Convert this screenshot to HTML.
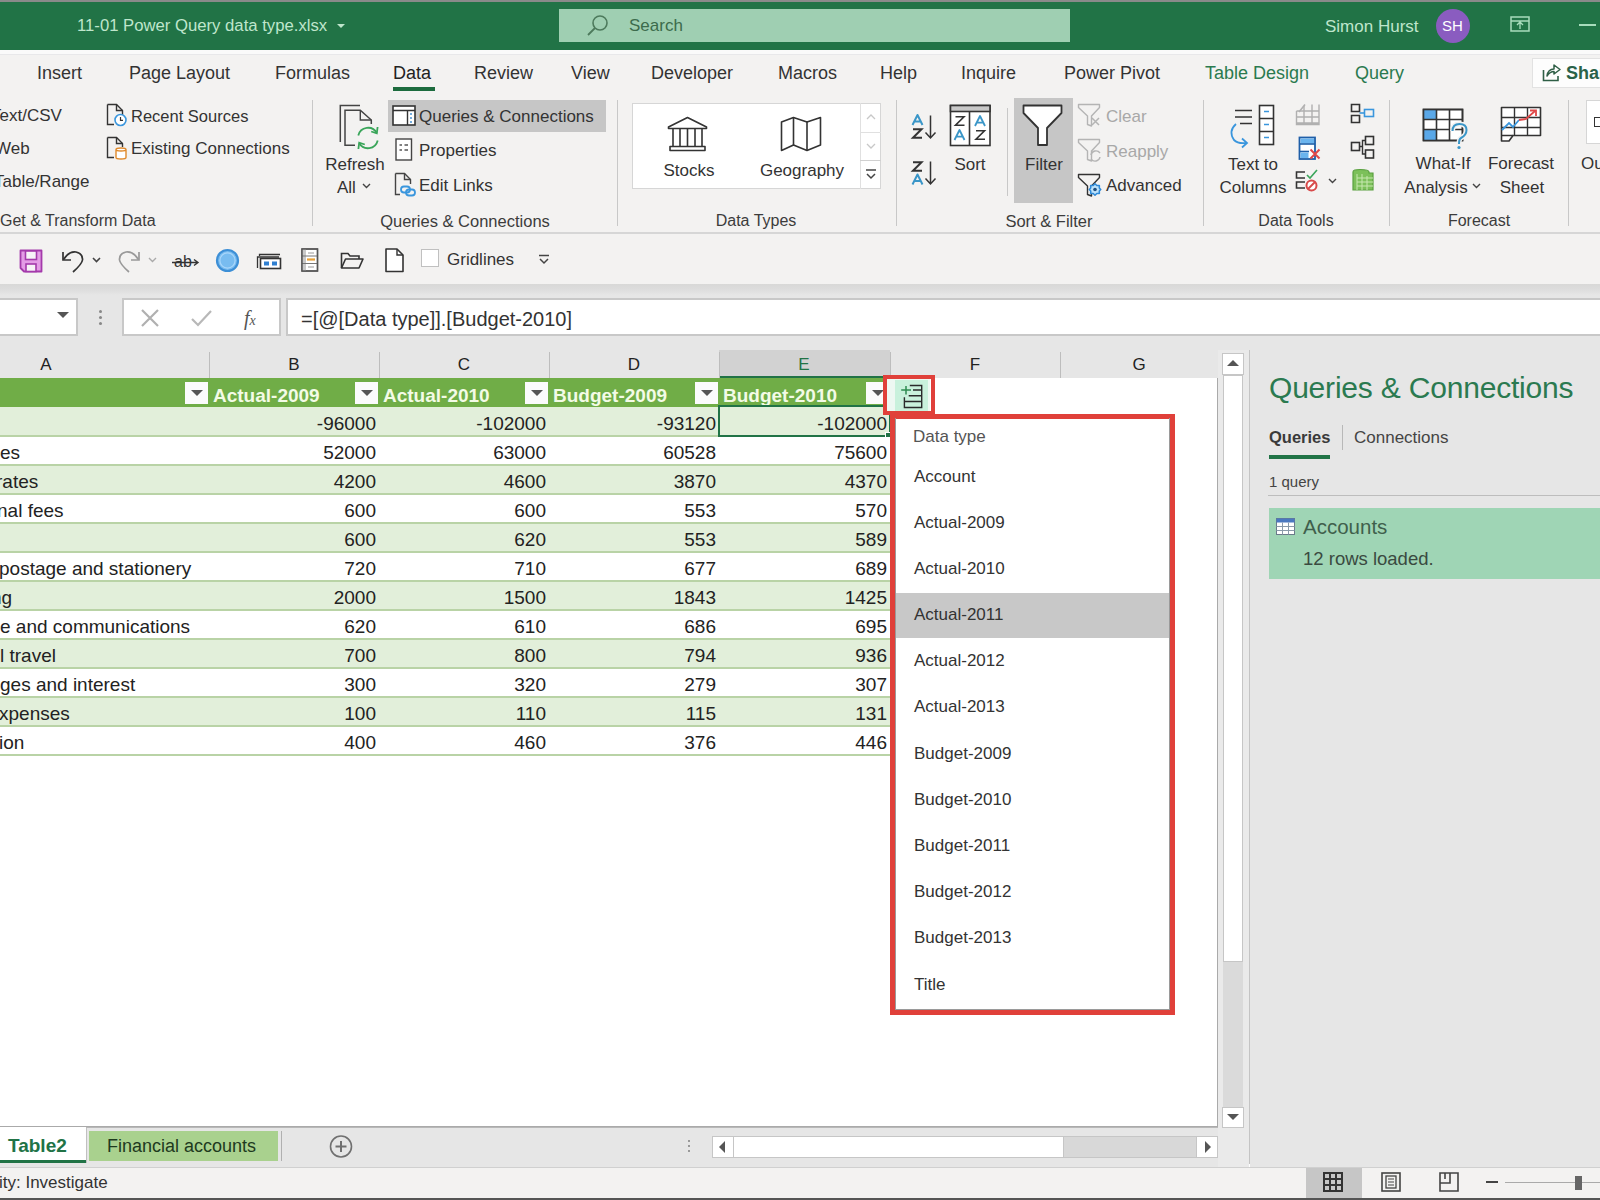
<!DOCTYPE html>
<html><head><meta charset="utf-8">
<style>
*{margin:0;padding:0;box-sizing:border-box}
html,body{width:1600px;height:1200px;overflow:hidden;background:#fff;font-family:"Liberation Sans",sans-serif}
.a{position:absolute}
.t{position:absolute;white-space:nowrap;line-height:1}
svg{position:absolute;overflow:visible}
.tab{color:#333;font-size:18px}
.grp{color:#444;font-size:16px}
.rb{color:#333;font-size:17px}
</style></head><body>


<div class="a" style="left:0;top:0;width:1600px;height:50px;background:#217346;border-top:2px solid #8a8a8a"></div>
<div class="t" style="left:77px;top:18px;font-size:16.7px;color:#bfe6cc">11-01 Power Query data type.xlsx</div>
<div class="a" style="left:337px;top:24px;border-left:4px solid transparent;border-right:4px solid transparent;border-top:4px solid #bfe6cc"></div>
<div class="a" style="left:559px;top:9px;width:511px;height:33px;background:#9fcfb2"></div>
<svg style="left:585px;top:13px" width="26" height="26"><circle cx="15" cy="10" r="7" stroke="#4d7a5c" stroke-width="1.6" fill="none"/><path d="M10 15L3 22" stroke="#4d7a5c" stroke-width="1.8"/></svg>
<div class="t" style="left:629px;top:17px;font-size:17px;color:#3c6b4c">Search</div>
<div class="t" style="left:1325px;top:18px;font-size:17px;color:#bfe6cc">Simon Hurst</div>
<div class="a" style="left:1436px;top:9px;width:34px;height:34px;border-radius:50%;background:#8a5cc0"></div>
<div class="t" style="left:1442px;top:18px;font-size:15px;color:#fff">SH</div>
<svg style="left:1510px;top:16px" width="22" height="18"><rect x="1" y="1" width="18" height="14" stroke="#a8dcbc" stroke-width="1.5" fill="none"/><path d="M1 5H19M10 6V13M7 9L10 6L13 9" stroke="#a8dcbc" stroke-width="1.3" fill="none"/></svg>
<div class="a" style="left:1579px;top:24px;width:17px;height:2px;background:#a8dcbc"></div>


<div class="a" style="left:0;top:50px;width:1600px;height:184px;background:#f3f2f1;border-bottom:2px solid #d6d6d6"></div>
<div class="t tab" style="left:37px;top:64px">Insert</div>
<div class="t tab" style="left:129px;top:64px">Page Layout</div>
<div class="t tab" style="left:275px;top:64px">Formulas</div>
<div class="t tab" style="left:393px;top:64px;color:#222">Data</div>
<div class="a" style="left:393px;top:87px;width:42px;height:4px;background:#1c6b3e"></div>
<div class="t tab" style="left:474px;top:64px">Review</div>
<div class="t tab" style="left:571px;top:64px">View</div>
<div class="t tab" style="left:651px;top:64px">Developer</div>
<div class="t tab" style="left:778px;top:64px">Macros</div>
<div class="t tab" style="left:880px;top:64px">Help</div>
<div class="t tab" style="left:961px;top:64px">Inquire</div>
<div class="t tab" style="left:1064px;top:64px">Power Pivot</div>
<div class="t tab" style="left:1205px;top:64px;color:#2a7a4f">Table Design</div>
<div class="t tab" style="left:1355px;top:64px;color:#2a7a4f">Query</div>
<div class="a" style="left:0;top:50px;width:1600px;height:5px;background:#fafafa;border-bottom:1px solid #e8e8ea"></div>
<div class="a" style="left:1532px;top:58px;width:70px;height:30px;background:#fdfdfd;border:1px solid #e2e2e2"></div>
<svg style="left:1542px;top:63px" width="20" height="20"><path d="M1.5 7V17.5H16V13" fill="none" stroke="#2f5f46" stroke-width="1.6"/><path d="M5 13Q6 6 12 6V2L18 6.5L12 11V8.5Q8 8.5 5 13Z" fill="none" stroke="#2f5f46" stroke-width="1.5" stroke-linejoin="round"/></svg>
<div class="t tab" style="left:1566px;top:64px;color:#2a6248;font-weight:bold">Share</div>

<div class="t" style="left:-9px;top:107px;font-size:17px;color:#333;">Text/CSV</div>
<div class="t" style="left:-5px;top:140px;font-size:17px;color:#333;">Web</div>
<div class="t" style="left:-6px;top:173px;font-size:17px;color:#333;">Table/Range</div>
<svg style="left:106px;top:103px" width="22" height="24"><path d="M1.5 1.5H10.5L16.5 7.5V14 M1.5 1.5V21.5H8" fill="none" stroke="#333" stroke-width="1.4"/><path d="M10.5 1.5V7.5H16.5" fill="none" stroke="#333" stroke-width="1.4"/><circle cx="14.5" cy="17" r="5.5" fill="#fff" stroke="#3a96dd" stroke-width="1.6"/><path d="M14.5 14V17.3H17" fill="none" stroke="#333" stroke-width="1.2"/></svg>
<div class="t" style="left:131px;top:108px;font-size:16.5px;color:#333;">Recent Sources</div>
<svg style="left:106px;top:136px" width="22" height="24"><path d="M1.5 1.5H10.5L16.5 7.5V11 M1.5 1.5V21.5H8" fill="none" stroke="#333" stroke-width="1.4"/><path d="M10.5 1.5V7.5H16.5" fill="none" stroke="#333" stroke-width="1.4"/><path d="M10 13.5V21.5Q10 23 15 23Q20 23 20 21.5V13.5Q20 12 15 12Q10 12 10 13.5Q10 15 15 15Q20 15 20 13.5" fill="#fff" stroke="#e08a2c" stroke-width="1.4"/></svg>
<div class="t" style="left:131px;top:140px;font-size:17px;color:#333;">Existing Connections</div>
<div class="t" style="left:0px;top:213px;font-size:16px;color:#3c3c3c;font-weight:normal">Get &amp; Transform Data</div>
<div class="a" style="left:312px;top:100px;width:1px;height:126px;background:#c8c8c8"></div>
<svg style="left:338px;top:104px" width="46" height="48"><path d="M2.3 38V1.6H22" fill="none" stroke="#444" stroke-width="1.5"/><path d="M17 41.2H7V6.3H22.3L33.3 16V20" fill="none" stroke="#444" stroke-width="1.5" stroke-linejoin="miter"/><path d="M22.3 6.3V16H33.3" fill="none" stroke="#444" stroke-width="1.4"/><path d="M20.3 31.5A10 10 0 0 1 38.8 29" fill="none" stroke="#3aa55a" stroke-width="1.8"/><path d="M39.6 23L38.8 29.3L33.2 27.5" fill="none" stroke="#3aa55a" stroke-width="1.8"/><path d="M39.7 36.5A10 10 0 0 1 21.2 39" fill="none" stroke="#3aa55a" stroke-width="1.8"/><path d="M20.4 45L21.2 38.7L26.8 40.5" fill="none" stroke="#3aa55a" stroke-width="1.8"/></svg>
<div class="t" style="left:205px;width:300px;text-align:center;top:156px;font-size:17px;color:#333;">Refresh</div>
<div class="t" style="left:337px;top:179px;font-size:17px;color:#333;">All</div>
<svg style="left:362px;top:183px" width="10" height="6"><path d="M1 1L4.5 4.5L8 1" fill="none" stroke="#444" stroke-width="1.4"/></svg>
<div class="a" style="left:388px;top:100px;width:218px;height:32px;background:#c6c6c6"></div>
<svg style="left:392px;top:105px" width="24" height="21"><rect x="1" y="1" width="22" height="19" fill="#fff" stroke="#333" stroke-width="1.6"/><path d="M1 5.5H23M15.5 5.5V20" stroke="#333" stroke-width="1.4"/><path d="M19 8V10M19 12V14M19 16V18" stroke="#3a8ad0" stroke-width="1.4"/></svg>
<div class="t" style="left:419px;top:108px;font-size:17px;color:#333;">Queries &amp; Connections</div>
<svg style="left:395px;top:138px" width="18" height="24"><rect x="1" y="1" width="15.5" height="21" fill="#fff" stroke="#444" stroke-width="1.4"/><path d="M4.5 7H7M9.5 7H13M4.5 12H7M9.5 12H13" stroke="#555" stroke-width="1.6"/></svg>
<div class="t" style="left:419px;top:142px;font-size:17px;color:#333;">Properties</div>
<svg style="left:394px;top:172px" width="24" height="25"><path d="M1.5 1.5H10.5L16.5 7.5V12 M1.5 1.5V22.5H6" fill="none" stroke="#444" stroke-width="1.4"/><path d="M10.5 1.5V7.5H16.5" fill="none" stroke="#444" stroke-width="1.4"/><rect x="7" y="14.5" width="9" height="6" rx="3" fill="none" stroke="#3a96dd" stroke-width="1.8"/><rect x="12" y="17.5" width="9" height="6" rx="3" fill="none" stroke="#3a96dd" stroke-width="1.8"/></svg>
<div class="t" style="left:419px;top:177px;font-size:17px;color:#333;">Edit Links</div>
<div class="t" style="left:315px;width:300px;text-align:center;top:213px;font-size:16.5px;color:#3c3c3c;">Queries &amp; Connections</div>
<div class="a" style="left:617px;top:100px;width:1px;height:126px;background:#c8c8c8"></div>
<div class="a" style="left:632px;top:103px;width:249px;height:86px;background:#fff;border:1px solid #d6d6d6"></div>
<div class="a" style="left:860px;top:103px;width:1px;height:86px;background:#e0e0e0"></div>
<div class="a" style="left:860px;top:132px;width:21px;height:1px;background:#e0e0e0"></div>
<div class="a" style="left:860px;top:160px;width:21px;height:1px;background:#d0d0d0"></div>
<svg style="left:865px;top:113px" width="12" height="8"><path d="M2 6L6 2L10 6" fill="none" stroke="#c8c8c8" stroke-width="1.3"/></svg>
<svg style="left:865px;top:142px" width="12" height="8"><path d="M2 2L6 6L10 2" fill="none" stroke="#c8c8c8" stroke-width="1.3"/></svg>
<svg style="left:864px;top:167px" width="14" height="14"><path d="M2 3H12M3 7L7 11L11 7" fill="none" stroke="#444" stroke-width="1.5"/></svg>
<svg style="left:667px;top:116px" width="42" height="37"><path d="M1.5 11L20.5 1.5L39.5 11V12.5H1.5Z" fill="none" stroke="#333" stroke-width="1.6" stroke-linejoin="round"/><path d="M6 13V31M13 13V31M20.5 13V31M28 13V31M35 13V31" stroke="#333" stroke-width="1.6"/><path d="M3 30.5H38V34.5H3Z" fill="none" stroke="#333" stroke-width="1.6" stroke-linejoin="round"/></svg>
<div class="t" style="left:539px;width:300px;text-align:center;top:162px;font-size:17px;color:#333;">Stocks</div>
<svg style="left:780px;top:116px" width="44" height="38"><path d="M1.5 6L13.5 1.5L27 6L40.5 1.5V29L27 34.5L13.5 29L1.5 34.5Z" fill="none" stroke="#333" stroke-width="1.6" stroke-linejoin="round"/><path d="M13.5 1.5V29M27 6V34.5" stroke="#333" stroke-width="1.6"/></svg>
<div class="t" style="left:652px;width:300px;text-align:center;top:162px;font-size:17px;color:#333;">Geography</div>
<div class="t" style="left:606px;width:300px;text-align:center;top:213px;font-size:16px;color:#3c3c3c;">Data Types</div>
<div class="a" style="left:896px;top:100px;width:1px;height:126px;background:#c8c8c8"></div>
<svg style="left:912px;top:115px" width="26" height="26"><path d="M0.5 10L5.5 0L10.5 10M2.7 6.6H8.3" fill="none" stroke="#3a96c8" stroke-width="2.0" stroke-linejoin="round"/><path d="M1.0 14.3H9.5L1.0 22.7H10.0" fill="none" stroke="#333" stroke-width="2.0" stroke-linejoin="miter"/><path d="M18.5 0.5V23M13.5 17.5L18.5 23L23.5 17.5" fill="none" stroke="#333" stroke-width="1.5"/></svg>
<svg style="left:912px;top:161px" width="26" height="26"><path d="M1.0 1.3H9.5L1.0 9.7H10.0" fill="none" stroke="#333" stroke-width="2.0" stroke-linejoin="miter"/><path d="M0.5 23.5L5.5 13.5L10.5 23.5M2.7 20.1H8.3" fill="none" stroke="#3a96c8" stroke-width="2.0" stroke-linejoin="round"/><path d="M18.5 0.5V23M13.5 17.5L18.5 23L23.5 17.5" fill="none" stroke="#333" stroke-width="1.5"/></svg>
<svg style="left:949px;top:104px" width="43" height="43"><rect x="1.5" y="1.5" width="39.5" height="40" fill="#fff" stroke="#333" stroke-width="1.6"/><rect x="1.5" y="1.5" width="39.5" height="6" fill="#c8c8c8" stroke="#333" stroke-width="1.6"/><path d="M20.5 7.5V41.5" stroke="#333" stroke-width="1.6"/><path d="M6.5 12.8H15L6.5 21.2H15.5" fill="none" stroke="#333" stroke-width="1.6" stroke-linejoin="miter"/><path d="M5.5 36L10.5 26L15.5 36M7.7 32.6H13.3" fill="none" stroke="#3a96c8" stroke-width="1.8" stroke-linejoin="round"/><path d="M26 22L31 12L36 22M28.2 18.6H33.8" fill="none" stroke="#3a96c8" stroke-width="1.8" stroke-linejoin="round"/><path d="M27.0 26.8H35.5L27.0 35.2H36.0" fill="none" stroke="#333" stroke-width="1.6" stroke-linejoin="miter"/></svg>
<div class="t" style="left:820px;width:300px;text-align:center;top:156px;font-size:17px;color:#333;">Sort</div>
<div class="a" style="left:1007px;top:108px;width:1px;height:88px;background:#c8c8c8"></div>
<div class="a" style="left:1014px;top:98px;width:59px;height:105px;background:#c6c6c6"></div>
<svg style="left:1022px;top:104px" width="42" height="44"><path d="M1.5 1.5H39.5V9L25 24V41H16V24L1.5 9Z" fill="#fff" stroke="#333" stroke-width="1.8" stroke-linejoin="round"/></svg>
<div class="t" style="left:894px;width:300px;text-align:center;top:156px;font-size:17px;color:#333;">Filter</div>
<svg style="left:1077px;top:103px" width="26" height="26"><path d="M1.5 1.5H22.5V4.5L14.5 13V23L10.5 21.5V13L1.5 4.5Z" fill="none" stroke="#b4b4b4" stroke-width="1.4" stroke-linejoin="round"/><path d="M15 15L22 22M22 15L15 22" stroke="#b4b4b4" stroke-width="1.5"/></svg>
<div class="t" style="left:1106px;top:108px;font-size:17px;color:#a8a8a8;">Clear</div>
<svg style="left:1077px;top:138px" width="26" height="26"><path d="M1.5 1.5H22.5V4.5L14.5 13V23L10.5 21.5V13L1.5 4.5Z" fill="none" stroke="#b4b4b4" stroke-width="1.4" stroke-linejoin="round"/><path d="M14 17A5 5 0 0 1 23 15M23 19A5 5 0 0 1 14 21" fill="none" stroke="#b4b4b4" stroke-width="1.4"/></svg>
<div class="t" style="left:1106px;top:143px;font-size:17px;color:#a8a8a8;">Reapply</div>
<svg style="left:1077px;top:173px" width="26" height="26"><path d="M1.5 1.5H22.5V4.5L14.5 13V23L10.5 21.5V13L1.5 4.5Z" fill="none" stroke="#333" stroke-width="1.4" stroke-linejoin="round"/><path d="M18 11.5L20.5 14L24 14L24 17.5L26 19.5L24 21.5L24 25L20.5 25L18 27.5L15.5 25L12 25L12 21.5L10 19.5L12 17.5L12 14L15.5 14Z" transform="translate(18 16.5) scale(0.72) translate(-18 -19.5)" fill="#bfe3fb" stroke="#2f8ad8" stroke-width="2.2" stroke-linejoin="round"/><circle cx="18" cy="16.5" r="1.8" fill="#1f4f80"/></svg>
<div class="t" style="left:1106px;top:177px;font-size:17px;color:#333;">Advanced</div>
<div class="t" style="left:899px;width:300px;text-align:center;top:213px;font-size:16.5px;color:#3c3c3c;">Sort &amp; Filter</div>
<div class="a" style="left:1203px;top:100px;width:1px;height:126px;background:#c8c8c8"></div>
<svg style="left:1228px;top:104px" width="48" height="44"><path d="M7 6.5H24M7 13H24M12 19.5H24" stroke="#333" stroke-width="1.6"/><rect x="31.5" y="1.5" width="14" height="39" fill="#fff" stroke="#333" stroke-width="1.6"/><path d="M31.5 14.5H45.5M31.5 27.5H45.5" stroke="#333" stroke-width="1.6"/><path d="M36 7.5H41M36 20.5H41M36 33.5H41" stroke="#3a96dd" stroke-width="1.4"/><path d="M8 20Q0 27 6 36Q10 40 18 39" fill="none" stroke="#3a96dd" stroke-width="1.8"/><path d="M14 34.5L19 39L14 43.5" fill="none" stroke="#3a96dd" stroke-width="1.8"/></svg>
<div class="t" style="left:1103px;width:300px;text-align:center;top:156px;font-size:17px;color:#333;">Text to</div>
<div class="t" style="left:1103px;width:300px;text-align:center;top:179px;font-size:17px;color:#333;">Columns</div>
<svg style="left:1295px;top:103px" width="26" height="23"><path d="M1.5 8H24M1.5 14H24M1.5 20H24M9 3V21.5M17 1.5V21.5M24 1.5V21.5H1.5V8" fill="none" stroke="#b0b0b0" stroke-width="1.4"/><path d="M4 9L10 1.5" stroke="#b0b0b0" stroke-width="1.6"/></svg>
<svg style="left:1298px;top:136px" width="26" height="25"><rect x="1.5" y="1.5" width="15.5" height="21.5" fill="#fff" stroke="#1f5fa8" stroke-width="1.8"/><rect x="2.5" y="2.5" width="13.5" height="5" fill="#6ab4ee"/><path d="M1.5 8H17" stroke="#1f5fa8" stroke-width="1.6"/><path d="M1.5 15.5H11" stroke="#1f5fa8" stroke-width="1.6"/><rect x="2.5" y="16.5" width="8" height="5.5" fill="#6ab4ee"/><path d="M12.5 13.5L21.5 22.5M21.5 13.5L12.5 22.5" stroke="#e04848" stroke-width="2"/></svg>
<svg style="left:1295px;top:168px" width="26" height="25"><path d="M10 4H1.5V10H10M10 14H1.5V20H10" fill="none" stroke="#333" stroke-width="1.6"/><path d="M12 7L15 10L22 2" fill="none" stroke="#3aa55a" stroke-width="1.6"/><circle cx="16.5" cy="17.5" r="5" fill="#fff" stroke="#d84a4a" stroke-width="2"/><path d="M13 21L20 14" stroke="#d84a4a" stroke-width="2"/></svg>
<svg style="left:1328px;top:178px" width="10" height="6"><path d="M1 1L4.5 4.5L8 1" fill="none" stroke="#444" stroke-width="1.4"/></svg>
<svg style="left:1350px;top:103px" width="26" height="22"><path d="M1.5 1.5H9.5V8.5H1.5ZM1.5 12.5H9.5V19.5H1.5Z" fill="none" stroke="#333" stroke-width="1.6"/><rect x="14.5" y="6.5" width="9" height="7" fill="none" stroke="#3a96dd" stroke-width="1.6"/><path d="M9.5 10H14.5" stroke="#3a96dd" stroke-width="1.6"/></svg>
<svg style="left:1350px;top:135px" width="26" height="25"><rect x="1.5" y="7.5" width="8" height="8" fill="none" stroke="#333" stroke-width="1.6"/><rect x="15.5" y="1.5" width="8" height="8" fill="none" stroke="#333" stroke-width="1.6"/><rect x="15.5" y="15" width="8" height="8" fill="none" stroke="#333" stroke-width="1.6"/><path d="M9.5 11.5H12.5V5.5H15.5M12.5 11.5V19H15.5" fill="none" stroke="#333" stroke-width="1.4"/></svg>
<svg style="left:1350px;top:168px" width="26" height="25"><path d="M3 4Q3 1.5 10 1.5Q19 1.5 19 4V5H23V22H3Z" fill="#7cc05a" stroke="#5aa040" stroke-width="1.2"/><path d="M7 6V22M12 6V22M17 8V22M7 10H23M7 14H23M7 18H23" stroke="#c8e8b0" stroke-width="1"/></svg>
<div class="t" style="left:1146px;width:300px;text-align:center;top:213px;font-size:16px;color:#3c3c3c;">Data Tools</div>
<div class="a" style="left:1389px;top:100px;width:1px;height:126px;background:#c8c8c8"></div>
<svg style="left:1422px;top:108px" width="48" height="42"><rect x="1.5" y="1.5" width="39" height="31" fill="#fff" stroke="#333" stroke-width="1.6"/><rect x="1.5" y="1.5" width="13" height="10" fill="#5aa8e8"/><rect x="1.5" y="21.5" width="13" height="11" fill="#5aa8e8"/><path d="M1.5 11.5H40.5M1.5 21.5H40.5M14.5 1.5V32.5M27.5 1.5V32.5" stroke="#333" stroke-width="1.6"/><rect x="1.5" y="1.5" width="39" height="31" fill="none" stroke="#333" stroke-width="1.6"/><path d="M30.5 23Q30.5 16 37.5 16Q44.5 16 44.5 22Q44.5 27 39 30Q37 31 37 36" fill="none" stroke="#f3f2f1" stroke-width="5"/><path d="M30.5 23Q30.5 16 37.5 16Q44.5 16 44.5 22Q44.5 27 39 30Q37 31 37 36" fill="none" stroke="#3a96c8" stroke-width="2"/><circle cx="37" cy="39.5" r="1.6" fill="#3a96c8"/></svg>
<div class="t" style="left:1293px;width:300px;text-align:center;top:155px;font-size:17px;color:#333;">What-If</div>
<div class="t" style="left:1286px;width:300px;text-align:center;top:179px;font-size:17px;color:#333;">Analysis</div>
<svg style="left:1472px;top:183px" width="10" height="6"><path d="M1 1L4.5 4.5L8 1" fill="none" stroke="#444" stroke-width="1.4"/></svg>
<svg style="left:1500px;top:106px" width="44" height="38"><path d="M1.5 1.5H40.5V29.5H13L9 35H1.5Z" fill="#fff" stroke="#333" stroke-width="1.6" stroke-linejoin="round"/><path d="M1.5 11.5H40.5M1.5 21.5H40.5M14.5 1.5V29.5M27.5 1.5V29.5M1.5 29.5H13" stroke="#333" stroke-width="1.4"/><path d="M2 24L9 17L13 21L19 14" fill="none" stroke="#3a96dd" stroke-width="1.8"/><path d="M19 14L26 13L35 5" fill="none" stroke="#e04848" stroke-width="1.8"/><path d="M30 4.5H36V10" fill="none" stroke="#e04848" stroke-width="1.8"/></svg>
<div class="t" style="left:1371px;width:300px;text-align:center;top:155px;font-size:17px;color:#333;">Forecast</div>
<div class="t" style="left:1372px;width:300px;text-align:center;top:179px;font-size:17px;color:#333;">Sheet</div>
<div class="t" style="left:1329px;width:300px;text-align:center;top:213px;font-size:16px;color:#3c3c3c;">Forecast</div>
<div class="a" style="left:1568px;top:100px;width:1px;height:126px;background:#c8c8c8"></div>
<div class="a" style="left:1586px;top:100px;width:20px;height:44px;background:#fff;border:1px solid #d6d6d6"></div>
<div class="a" style="left:1594px;top:117px;width:6px;height:10px;border:1.5px solid #333;border-right:none"></div>
<div class="t" style="left:1581px;top:155px;font-size:17px;color:#333;">Ou</div>

<div class="a" style="left:0;top:234px;width:1600px;height:50px;background:#f3f2f1"></div>

<svg style="left:19px;top:249px" width="25" height="25"><path d="M1.5 1.5H22.5V22.5H5L1.5 19Z" fill="#e49ce6" stroke="#a43aab" stroke-width="1.8" stroke-linejoin="round"/><rect x="6.5" y="2" width="11" height="8.5" fill="#f7f2f7" stroke="#a43aab" stroke-width="1.6"/><rect x="7" y="15" width="10" height="7.5" fill="#f7f2f7" stroke="#a43aab" stroke-width="1.6"/></svg>
<svg style="left:61px;top:249px" width="26" height="25"><path d="M2 3V11H10" fill="none" stroke="#333" stroke-width="1.7"/><path d="M2.5 10.5Q8 2 15 3Q22 4.5 21.5 11Q21 15 12 23" fill="none" stroke="#333" stroke-width="1.7"/></svg>
<svg style="left:92px;top:257px" width="10" height="6"><path d="M1 1L4.5 4.5L8 1" fill="none" stroke="#444" stroke-width="1.6"/></svg>
<svg style="left:117px;top:249px" width="26" height="25"><path d="M22 3V11H14" fill="none" stroke="#999" stroke-width="1.7"/><path d="M21.5 10.5Q16 2 9 3Q2 4.5 2.5 11Q3 15 12 23" fill="none" stroke="#999" stroke-width="1.7"/></svg>
<svg style="left:148px;top:257px" width="10" height="6"><path d="M1 1L4.5 4.5L8 1" fill="none" stroke="#aaa" stroke-width="1.4"/></svg>
<svg style="left:172px;top:252px" width="28" height="20"><text x="2" y="15" font-family="Liberation Sans" font-size="16" fill="#333">ab</text><path d="M0 10.5H26M22 7.5L26 10.5L22 13.5" fill="none" stroke="#333" stroke-width="1.4"/></svg>
<svg style="left:215px;top:248px" width="25" height="25"><circle cx="12.5" cy="12.5" r="10.5" fill="#78bcf0" stroke="#3d8fd6" stroke-width="2.2"/><circle cx="12.5" cy="12.5" r="7.6" fill="none" stroke="#a9d6fa" stroke-width="1.2"/></svg>
<svg style="left:256px;top:253px" width="27" height="17"><path d="M1.5 15V4H23M3.5 3V1.5H24" fill="none" stroke="#333" stroke-width="1.3"/><rect x="4.5" y="5.5" width="20" height="10" fill="#fff" stroke="#333" stroke-width="1.6"/><rect x="8" y="8.5" width="5" height="4" fill="#2f7fd0"/><rect x="16" y="8.5" width="5" height="4" fill="#2f7fd0"/></svg>
<svg style="left:301px;top:248px" width="18" height="25"><rect x="1" y="1" width="15.5" height="22" fill="#fff" stroke="#555" stroke-width="1.4"/><rect x="1" y="1" width="4" height="22" fill="#c8c8c8"/><path d="M1 8H16.5M1 15.5H16.5" stroke="#777" stroke-width="1"/><path d="M6 11.5H14" stroke="#e8a23a" stroke-width="2.2"/><path d="M7 5H13M7 19H13" stroke="#999" stroke-width="1"/><rect x="1" y="1" width="15.5" height="22" fill="none" stroke="#555" stroke-width="1.4"/></svg>
<svg style="left:340px;top:251px" width="25" height="19"><path d="M1.5 17V2.5H8L10 5H19V8" fill="none" stroke="#333" stroke-width="1.6"/><path d="M1.5 17L5.5 8H23L19 17Z" fill="none" stroke="#333" stroke-width="1.6" stroke-linejoin="round"/></svg>
<svg style="left:385px;top:248px" width="20" height="25"><path d="M1 1H12L18 7V23.5H1Z" fill="#fff" stroke="#333" stroke-width="1.6" stroke-linejoin="round"/><path d="M12 1V7H18" fill="none" stroke="#333" stroke-width="1.4"/></svg>
<div class="a" style="left:421px;top:249px;width:18px;height:18px;background:#fff;border:1px solid #c0c0c0"></div>
<div class="t" style="left:447px;top:251px;font-size:17px;color:#333;">Gridlines</div>
<svg style="left:538px;top:254px" width="12" height="11"><path d="M1 1.5H11M2 5L6 9L10 5" fill="none" stroke="#444" stroke-width="1.5"/></svg>

<div class="a" style="left:0;top:284px;width:1600px;height:66px;background:linear-gradient(#d8d8d7 0px,#dcdcdc 5px,#e6e6e6 11px,#e6e6e6 66px)"></div>
<div class="a" style="left:-2px;top:298px;width:80px;height:38px;background:#fff;border:2px solid #c8c8c8"></div>
<div class="a" style="left:57px;top:312px;border-left:6px solid transparent;border-right:6px solid transparent;border-top:6px solid #555"></div>
<div class="a" style="left:99px;top:310px;width:3px;height:3px;background:#888;border-radius:50%;box-shadow:0 6px 0 #888,0 12px 0 #888"></div>
<div class="a" style="left:122px;top:298px;width:159px;height:38px;background:#fff;border:2px solid #c8c8c8"></div>
<div class="a" style="left:286px;top:298px;width:1320px;height:38px;background:#fff;border:2px solid #c8c8c8"></div>
<svg style="left:140px;top:308px" width="20" height="20"><path d="M2 2L18 18M18 2L2 18" stroke="#b0b0b0" stroke-width="2.2"/></svg>
<svg style="left:190px;top:308px" width="24" height="20"><path d="M2 11L8 17L21 3" stroke="#b8b8b8" stroke-width="2.2" fill="none"/></svg>
<div class="t" style="left:244px;top:307px;font:italic 20px 'Liberation Serif';color:#555">f<span style="font-size:14px">x</span></div>
<div class="t" style="left:301px;top:309px;font-size:20px;color:#333">=[@[Data type]].[Budget-2010]</div>


<div class="a" style="left:0;top:350px;width:1250px;height:777px;background:#e6e6e6"></div>
<div class="a" style="left:719px;top:350px;width:171px;height:28px;background:#d2d2d2;border-bottom:2px solid #217346"></div>
<div class="a" style="left:0;top:378px;width:1218px;height:749px;background:#fff;border-right:1px solid #aaa;border-bottom:1px solid #aaa"></div>

<div class="t" style="left:38px;top:356px;width:16px;text-align:center;font-size:17px;color:#222">A</div>
<div class="a" style="left:209px;top:352px;width:1px;height:26px;background:#bdbdbd"></div>
<div class="t" style="left:286px;top:356px;width:16px;text-align:center;font-size:17px;color:#222">B</div>
<div class="a" style="left:379px;top:352px;width:1px;height:26px;background:#bdbdbd"></div>
<div class="t" style="left:456px;top:356px;width:16px;text-align:center;font-size:17px;color:#222">C</div>
<div class="a" style="left:549px;top:352px;width:1px;height:26px;background:#bdbdbd"></div>
<div class="t" style="left:626px;top:356px;width:16px;text-align:center;font-size:17px;color:#222">D</div>
<div class="a" style="left:719px;top:352px;width:1px;height:26px;background:#bdbdbd"></div>
<div class="t" style="left:796px;top:356px;width:16px;text-align:center;font-size:17px;color:#217346">E</div>
<div class="a" style="left:890px;top:352px;width:1px;height:26px;background:#bdbdbd"></div>
<div class="t" style="left:967px;top:356px;width:16px;text-align:center;font-size:17px;color:#222">F</div>
<div class="a" style="left:1060px;top:352px;width:1px;height:26px;background:#bdbdbd"></div>
<div class="t" style="left:1131px;top:356px;width:16px;text-align:center;font-size:17px;color:#222">G</div>
<div class="a" style="left:0;top:378px;width:890px;height:29px;background:#70ad47"></div>
<div class="t" style="left:213px;top:386px;font-size:19px;font-weight:bold;color:#f3fbe6">Actual-2009</div>
<div class="t" style="left:383px;top:386px;font-size:19px;font-weight:bold;color:#f3fbe6">Actual-2010</div>
<div class="t" style="left:553px;top:386px;font-size:19px;font-weight:bold;color:#f3fbe6">Budget-2009</div>
<div class="t" style="left:723px;top:386px;font-size:19px;font-weight:bold;color:#f3fbe6">Budget-2010</div>
<div class="a" style="left:185px;top:382px;width:23px;height:22px;background:#fbfbfb"></div>
<div class="a" style="left:191px;top:390px;border-left:6px solid transparent;border-right:6px solid transparent;border-top:6px solid #555"></div>
<div class="a" style="left:355px;top:382px;width:23px;height:22px;background:#fbfbfb"></div>
<div class="a" style="left:361px;top:390px;border-left:6px solid transparent;border-right:6px solid transparent;border-top:6px solid #555"></div>
<div class="a" style="left:525px;top:382px;width:23px;height:22px;background:#fbfbfb"></div>
<div class="a" style="left:531px;top:390px;border-left:6px solid transparent;border-right:6px solid transparent;border-top:6px solid #555"></div>
<div class="a" style="left:695px;top:382px;width:23px;height:22px;background:#fbfbfb"></div>
<div class="a" style="left:701px;top:390px;border-left:6px solid transparent;border-right:6px solid transparent;border-top:6px solid #555"></div>
<div class="a" style="left:866px;top:382px;width:23px;height:22px;background:#fbfbfb"></div>
<div class="a" style="left:872px;top:390px;border-left:6px solid transparent;border-right:6px solid transparent;border-top:6px solid #555"></div>
<div class="a" style="left:0;top:407px;width:890px;height:29px;background:#e2efda"></div>
<div class="t" style="left:179px;top:414px;width:197px;text-align:right;font-size:19px;color:#222">-96000</div>
<div class="t" style="left:349px;top:414px;width:197px;text-align:right;font-size:19px;color:#222">-102000</div>
<div class="t" style="left:519px;top:414px;width:197px;text-align:right;font-size:19px;color:#222">-93120</div>
<div class="t" style="left:690px;top:414px;width:197px;text-align:right;font-size:19px;color:#222">-102000</div>
<div class="a" style="left:0;top:436px;width:890px;height:29px;background:#ffffff"></div>
<div class="t" style="left:0px;top:443px;font-size:19px;color:#222">es</div>
<div class="t" style="left:179px;top:443px;width:197px;text-align:right;font-size:19px;color:#222">52000</div>
<div class="t" style="left:349px;top:443px;width:197px;text-align:right;font-size:19px;color:#222">63000</div>
<div class="t" style="left:519px;top:443px;width:197px;text-align:right;font-size:19px;color:#222">60528</div>
<div class="t" style="left:690px;top:443px;width:197px;text-align:right;font-size:19px;color:#222">75600</div>
<div class="a" style="left:0;top:465px;width:890px;height:29px;background:#e2efda"></div>
<div class="t" style="left:-4px;top:472px;font-size:19px;color:#222">rates</div>
<div class="t" style="left:179px;top:472px;width:197px;text-align:right;font-size:19px;color:#222">4200</div>
<div class="t" style="left:349px;top:472px;width:197px;text-align:right;font-size:19px;color:#222">4600</div>
<div class="t" style="left:519px;top:472px;width:197px;text-align:right;font-size:19px;color:#222">3870</div>
<div class="t" style="left:690px;top:472px;width:197px;text-align:right;font-size:19px;color:#222">4370</div>
<div class="a" style="left:0;top:494px;width:890px;height:29px;background:#ffffff"></div>
<div class="t" style="left:-3px;top:501px;font-size:19px;color:#222">nal fees</div>
<div class="t" style="left:179px;top:501px;width:197px;text-align:right;font-size:19px;color:#222">600</div>
<div class="t" style="left:349px;top:501px;width:197px;text-align:right;font-size:19px;color:#222">600</div>
<div class="t" style="left:519px;top:501px;width:197px;text-align:right;font-size:19px;color:#222">553</div>
<div class="t" style="left:690px;top:501px;width:197px;text-align:right;font-size:19px;color:#222">570</div>
<div class="a" style="left:0;top:523px;width:890px;height:29px;background:#e2efda"></div>
<div class="t" style="left:179px;top:530px;width:197px;text-align:right;font-size:19px;color:#222">600</div>
<div class="t" style="left:349px;top:530px;width:197px;text-align:right;font-size:19px;color:#222">620</div>
<div class="t" style="left:519px;top:530px;width:197px;text-align:right;font-size:19px;color:#222">553</div>
<div class="t" style="left:690px;top:530px;width:197px;text-align:right;font-size:19px;color:#222">589</div>
<div class="a" style="left:0;top:552px;width:890px;height:29px;background:#ffffff"></div>
<div class="t" style="left:-1px;top:559px;font-size:19px;color:#222">postage and stationery</div>
<div class="t" style="left:179px;top:559px;width:197px;text-align:right;font-size:19px;color:#222">720</div>
<div class="t" style="left:349px;top:559px;width:197px;text-align:right;font-size:19px;color:#222">710</div>
<div class="t" style="left:519px;top:559px;width:197px;text-align:right;font-size:19px;color:#222">677</div>
<div class="t" style="left:690px;top:559px;width:197px;text-align:right;font-size:19px;color:#222">689</div>
<div class="a" style="left:0;top:581px;width:890px;height:29px;background:#e2efda"></div>
<div class="t" style="left:-9px;top:588px;font-size:19px;color:#222">ng</div>
<div class="t" style="left:179px;top:588px;width:197px;text-align:right;font-size:19px;color:#222">2000</div>
<div class="t" style="left:349px;top:588px;width:197px;text-align:right;font-size:19px;color:#222">1500</div>
<div class="t" style="left:519px;top:588px;width:197px;text-align:right;font-size:19px;color:#222">1843</div>
<div class="t" style="left:690px;top:588px;width:197px;text-align:right;font-size:19px;color:#222">1425</div>
<div class="a" style="left:0;top:610px;width:890px;height:29px;background:#ffffff"></div>
<div class="t" style="left:0px;top:617px;font-size:19px;color:#222">e and communications</div>
<div class="t" style="left:179px;top:617px;width:197px;text-align:right;font-size:19px;color:#222">620</div>
<div class="t" style="left:349px;top:617px;width:197px;text-align:right;font-size:19px;color:#222">610</div>
<div class="t" style="left:519px;top:617px;width:197px;text-align:right;font-size:19px;color:#222">686</div>
<div class="t" style="left:690px;top:617px;width:197px;text-align:right;font-size:19px;color:#222">695</div>
<div class="a" style="left:0;top:639px;width:890px;height:29px;background:#e2efda"></div>
<div class="t" style="left:0px;top:646px;font-size:19px;color:#222">l travel</div>
<div class="t" style="left:179px;top:646px;width:197px;text-align:right;font-size:19px;color:#222">700</div>
<div class="t" style="left:349px;top:646px;width:197px;text-align:right;font-size:19px;color:#222">800</div>
<div class="t" style="left:519px;top:646px;width:197px;text-align:right;font-size:19px;color:#222">794</div>
<div class="t" style="left:690px;top:646px;width:197px;text-align:right;font-size:19px;color:#222">936</div>
<div class="a" style="left:0;top:668px;width:890px;height:29px;background:#ffffff"></div>
<div class="t" style="left:0px;top:675px;font-size:19px;color:#222">ges and interest</div>
<div class="t" style="left:179px;top:675px;width:197px;text-align:right;font-size:19px;color:#222">300</div>
<div class="t" style="left:349px;top:675px;width:197px;text-align:right;font-size:19px;color:#222">320</div>
<div class="t" style="left:519px;top:675px;width:197px;text-align:right;font-size:19px;color:#222">279</div>
<div class="t" style="left:690px;top:675px;width:197px;text-align:right;font-size:19px;color:#222">307</div>
<div class="a" style="left:0;top:697px;width:890px;height:29px;background:#e2efda"></div>
<div class="t" style="left:-1px;top:704px;font-size:19px;color:#222">xpenses</div>
<div class="t" style="left:179px;top:704px;width:197px;text-align:right;font-size:19px;color:#222">100</div>
<div class="t" style="left:349px;top:704px;width:197px;text-align:right;font-size:19px;color:#222">110</div>
<div class="t" style="left:519px;top:704px;width:197px;text-align:right;font-size:19px;color:#222">115</div>
<div class="t" style="left:690px;top:704px;width:197px;text-align:right;font-size:19px;color:#222">131</div>
<div class="a" style="left:0;top:726px;width:890px;height:29px;background:#ffffff"></div>
<div class="t" style="left:-1px;top:733px;font-size:19px;color:#222">ion</div>
<div class="t" style="left:179px;top:733px;width:197px;text-align:right;font-size:19px;color:#222">400</div>
<div class="t" style="left:349px;top:733px;width:197px;text-align:right;font-size:19px;color:#222">460</div>
<div class="t" style="left:519px;top:733px;width:197px;text-align:right;font-size:19px;color:#222">376</div>
<div class="t" style="left:690px;top:733px;width:197px;text-align:right;font-size:19px;color:#222">446</div>
<div class="a" style="left:0;top:435px;width:890px;height:2px;background:#b9d3a6"></div>
<div class="a" style="left:0;top:464px;width:890px;height:2px;background:#b9d3a6"></div>
<div class="a" style="left:0;top:493px;width:890px;height:2px;background:#b9d3a6"></div>
<div class="a" style="left:0;top:522px;width:890px;height:2px;background:#b9d3a6"></div>
<div class="a" style="left:0;top:551px;width:890px;height:2px;background:#b9d3a6"></div>
<div class="a" style="left:0;top:580px;width:890px;height:2px;background:#b9d3a6"></div>
<div class="a" style="left:0;top:609px;width:890px;height:2px;background:#b9d3a6"></div>
<div class="a" style="left:0;top:638px;width:890px;height:2px;background:#b9d3a6"></div>
<div class="a" style="left:0;top:667px;width:890px;height:2px;background:#b9d3a6"></div>
<div class="a" style="left:0;top:696px;width:890px;height:2px;background:#b9d3a6"></div>
<div class="a" style="left:0;top:725px;width:890px;height:2px;background:#b9d3a6"></div>
<div class="a" style="left:0;top:754px;width:890px;height:2px;background:#b9d3a6"></div>
<div class="a" style="left:718px;top:405px;width:173px;height:32px;border:2px solid #217346"></div>
<div class="a" style="left:885px;top:432px;width:6px;height:6px;background:#217346;border:1px solid #fff"></div>
<div class="a" style="left:1218px;top:350px;width:31px;height:817px;background:#eaeaea"></div>
<div class="a" style="left:1223px;top:375px;width:20px;height:587px;background:#fff;border:1px solid #c6c6c6"></div>
<div class="a" style="left:1223px;top:962px;width:20px;height:145px;background:#dadada"></div>
<div class="a" style="left:1222px;top:353px;width:22px;height:22px;background:#fff;border:1px solid #c6c6c6"></div>
<div class="a" style="left:1227px;top:360px;border-left:6px solid transparent;border-right:6px solid transparent;border-bottom:6px solid #555"></div>
<div class="a" style="left:1222px;top:1107px;width:22px;height:21px;background:#fff;border:1px solid #c6c6c6"></div>
<div class="a" style="left:1227px;top:1114px;border-left:6px solid transparent;border-right:6px solid transparent;border-top:6px solid #555"></div>
<div class="a" style="left:1249px;top:350px;width:1px;height:814px;background:#c4c4c4"></div>
<div class="a" style="left:1250px;top:350px;width:350px;height:817px;background:#e6e6e6"></div>
<div class="t" style="left:1269px;top:373px;font-size:30px;color:#2b7a50;letter-spacing:-0.2px">Queries &amp; Connections</div>
<div class="t" style="left:1269px;top:429px;font-size:16.5px;color:#3a3a3a;font-weight:bold">Queries</div>
<div class="a" style="left:1269px;top:455px;width:61px;height:4px;background:#217346"></div>
<div class="a" style="left:1342px;top:425px;width:1px;height:25px;background:#b8b8b8"></div>
<div class="t" style="left:1354px;top:429px;font-size:17px;color:#444">Connections</div>
<div class="t" style="left:1269px;top:474px;font-size:15px;color:#444">1 query</div>
<div class="a" style="left:1268px;top:495px;width:332px;height:1px;background:#bdbdbd"></div>
<div class="a" style="left:1269px;top:508px;width:331px;height:71px;background:#9fd5b5"></div>
<svg style="left:1276px;top:518px" width="20" height="18"><rect x="0.5" y="0.5" width="18" height="16" fill="#fff" stroke="#6a7a8a"/><rect x="0.5" y="0.5" width="18" height="4" fill="#4a78c0"/><path d="M0.5 8.5H18.5M0.5 12.5H18.5M6.5 4.5V16.5M12.5 4.5V16.5" stroke="#8a9aaa" stroke-width="1"/></svg>
<div class="t" style="left:1303px;top:517px;font-size:20.5px;color:#3f5f4c">Accounts</div>
<div class="t" style="left:1303px;top:550px;font-size:18.5px;color:#3a4a40">12 rows loaded.</div>
<div class="a" style="left:0;top:1127px;width:1218px;height:40px;background:#e6e6e6;border-top:1px solid #b8b8b8"></div>
<div class="a" style="left:0;top:1127px;width:86px;height:36px;background:#fff"></div>
<div class="a" style="left:0;top:1160px;width:86px;height:3px;background:#217346"></div>
<div class="t" style="left:8px;top:1136px;font-size:19px;font-weight:bold;color:#217346">Table2</div>
<div class="a" style="left:86px;top:1128px;width:1px;height:35px;background:#c0c0c0"></div>
<div class="a" style="left:89px;top:1131px;width:189px;height:30px;background:#a9d18e"></div>
<div class="t" style="left:107px;top:1137px;font-size:18px;color:#1e3a1e">Financial accounts</div>
<div class="a" style="left:281px;top:1131px;width:1px;height:30px;background:#b0b0b0"></div>
<svg style="left:329px;top:1135px" width="24" height="24"><circle cx="12" cy="11.5" r="10.5" stroke="#707070" stroke-width="1.6" fill="none"/><path d="M12 6V17M6.5 11.5H17.5" stroke="#707070" stroke-width="2"/></svg>
<div class="a" style="left:688px;top:1140px;width:2px;height:2px;background:#999;box-shadow:0 5px 0 #999,0 10px 0 #999"></div>
<div class="a" style="left:712px;top:1136px;width:505px;height:22px;background:#d8d8d8;border:1px solid #c6c6c6"></div>
<div class="a" style="left:712px;top:1136px;width:22px;height:22px;background:#fff;border:1px solid #c6c6c6"></div>
<div class="a" style="left:719px;top:1141px;border-top:6px solid transparent;border-bottom:6px solid transparent;border-right:6px solid #555"></div>
<div class="a" style="left:733px;top:1136px;width:331px;height:22px;background:#fff;border:1px solid #c6c6c6"></div>
<div class="a" style="left:1196px;top:1136px;width:22px;height:22px;background:#fff;border:1px solid #c6c6c6"></div>
<div class="a" style="left:1205px;top:1141px;border-top:6px solid transparent;border-bottom:6px solid transparent;border-left:6px solid #555"></div>
<div class="a" style="left:0;top:1167px;width:1600px;height:33px;background:#f3f2f1;border-top:1px solid #d0d0d0;border-bottom:2px solid #555"></div>
<div class="t" style="left:-1px;top:1174px;font-size:17px;color:#333">ity: Investigate</div>
<div class="a" style="left:1306px;top:1168px;width:56px;height:30px;background:#c6c6c6"></div>
<svg style="left:1323px;top:1172px" width="20" height="20"><rect x="1" y="1" width="18" height="18" fill="none" stroke="#333" stroke-width="2"/><path d="M7 1V19M13 1V19M1 7H19M1 13H19" stroke="#333" stroke-width="2"/></svg>
<svg style="left:1381px;top:1172px" width="20" height="20"><rect x="1" y="1" width="18" height="18" fill="none" stroke="#444" stroke-width="1.6"/><rect x="5" y="4" width="10" height="12" fill="none" stroke="#444" stroke-width="1.3"/><path d="M7 7H13M7 10H13M7 13H13" stroke="#444" stroke-width="1.2"/></svg>
<svg style="left:1439px;top:1172px" width="20" height="20"><path d="M1 1H19V19H1Z M1 11H11V1 M6 1V7" fill="none" stroke="#444" stroke-width="1.6"/></svg>
<div class="a" style="left:1486px;top:1181px;width:12px;height:2px;background:#444"></div>
<div class="a" style="left:1505px;top:1182px;width:95px;height:1px;background:#aaa"></div>
<div class="a" style="left:1575px;top:1176px;width:7px;height:14px;background:#666"></div>
<div class="a" style="left:883px;top:375px;width:52px;height:40px;border:4px solid #e0403a"></div>
<div class="a" style="left:887px;top:379px;width:43px;height:32px;background:#eef8f2"></div>
<div class="a" style="left:895px;top:380px;width:33px;height:31px;background:#c9f1dc"></div>
<svg style="left:900px;top:383px" width="26" height="28"><path d="M9.8 2.5H21.7V24.5H4.4V14.3M13 7H21.7M8.7 12.8H21.7M4.4 18.5H21.7" fill="none" stroke="#2a2a2a" stroke-width="1.4"/><path d="M6 3V11.5M1.2 7H11" stroke="#2e8a50" stroke-width="1.5"/></svg>
<div class="a" style="left:890px;top:414px;width:285px;height:601px;border:5px solid #e0403a;background:#fff"></div>
<div class="a" style="left:895px;top:418px;width:275px;height:592px;border:1px solid #9a9a9a;border-top:none"></div>
<div class="a" style="left:896px;top:593px;width:273px;height:45px;background:#c8c8c8"></div>
<div class="t" style="left:913px;top:428px;font-size:17px;color:#555">Data type</div>
<div class="t" style="left:914px;top:468px;font-size:17px;color:#333">Account</div>
<div class="t" style="left:914px;top:514px;font-size:17px;color:#333">Actual-2009</div>
<div class="t" style="left:914px;top:560px;font-size:17px;color:#333">Actual-2010</div>
<div class="t" style="left:914px;top:606px;font-size:17px;color:#333">Actual-2011</div>
<div class="t" style="left:914px;top:652px;font-size:17px;color:#333">Actual-2012</div>
<div class="t" style="left:914px;top:698px;font-size:17px;color:#333">Actual-2013</div>
<div class="t" style="left:914px;top:745px;font-size:17px;color:#333">Budget-2009</div>
<div class="t" style="left:914px;top:791px;font-size:17px;color:#333">Budget-2010</div>
<div class="t" style="left:914px;top:837px;font-size:17px;color:#333">Budget-2011</div>
<div class="t" style="left:914px;top:883px;font-size:17px;color:#333">Budget-2012</div>
<div class="t" style="left:914px;top:929px;font-size:17px;color:#333">Budget-2013</div>
<div class="t" style="left:914px;top:976px;font-size:17px;color:#333">Title</div>
</body></html>
